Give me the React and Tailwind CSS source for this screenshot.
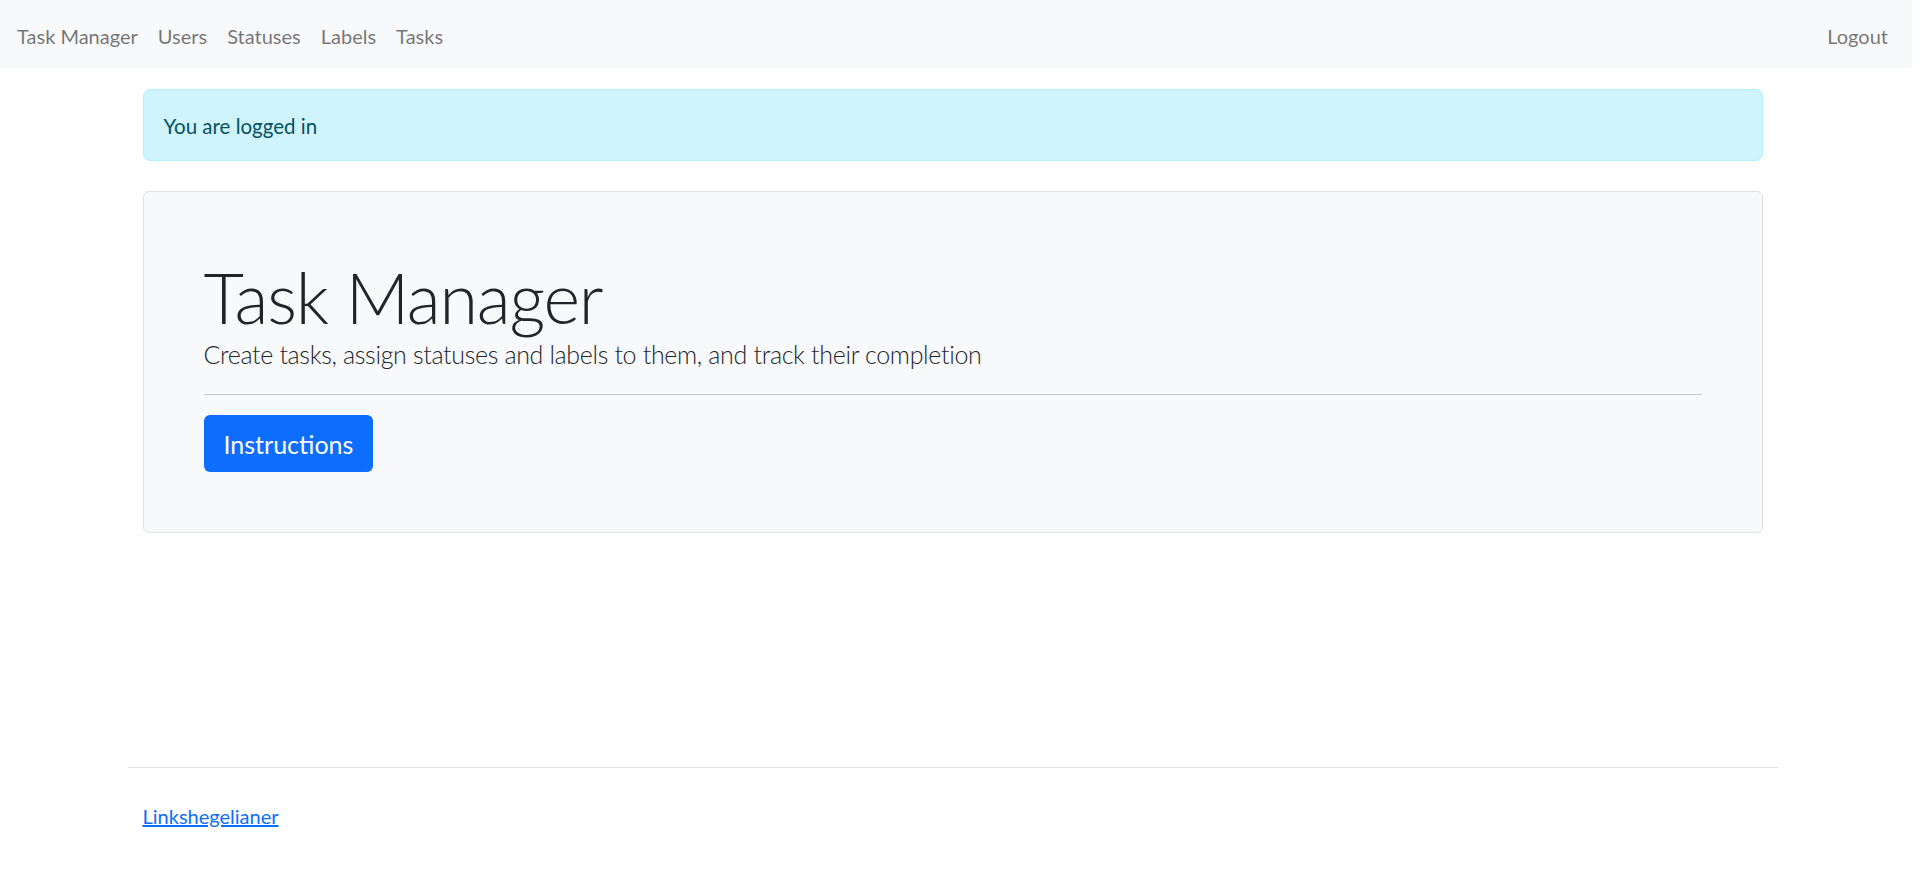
const navLinks = ['Users', 'Statuses', 'Labels', 'Tasks'];

const App = () => {
  return (
    <div
      className="flex min-h-[886px] w-[1905px] flex-col bg-white text-[20px] leading-[30px] text-[#212529]"
      style={{ fontFamily: 'Lato, "Open Sans", sans-serif' }}
    >
      <nav className="h-[68px] w-[1912px] bg-[#f8f9fa]">
        <div className="flex h-[68px] w-[1905px] items-center justify-between px-[7px] pt-[3px]">
          <ul className="flex items-center">
            <li>
              <a href="#" className="block px-[10px] text-black/55">
                Task Manager
              </a>
            </li>
            {navLinks.map((link) => (
              <li key={link}>
                <a href="#" className="block px-[10px] text-black/55">
                  {link}
                </a>
              </li>
            ))}
          </ul>
          <a href="#" className="block px-[10px] text-black/55">
            Logout
          </a>
        </div>
      </nav>

      <main className="mx-auto w-[1650px] px-[15px]">
        <div className="mt-[21px] rounded-[7px] border border-[#b6effb] bg-[#cff4fc] px-[20px] pt-[21px] pb-[19px] text-[20.5px] text-[#055160]">
          You are logged in
        </div>

        <div className="mt-[30px] rounded-[6px] border border-[#dee2e6] bg-[#f8f9fa] p-[60px]">
          <h1 className="pt-[7px] text-[70px] leading-[77px] font-light tracking-[-1.2px]">Task Manager</h1>
          <p className="text-[25px] leading-[37.5px] font-light tracking-[-0.34px]">
            Create tasks, assign statuses and labels to them, and track their completion
          </p>
          <hr className="my-[20px] border-t border-[#c6c7c8]" />
          <a
            href="#"
            className="inline-block rounded-[6px] bg-[#0d6efd] px-[20px] pt-[11px] pb-[9px] text-[25px] leading-[37.5px] text-white"
          >
            Instructions
          </a>
        </div>
      </main>

      <footer className="mx-auto mt-auto w-[1650px] border-t border-[#dee2e6] px-[15px] pt-[33px] pb-[55px]">
        <a href="#" className="text-[#0d6efd] underline">
          Linkshegelianer
        </a>
      </footer>
    </div>
  );
};

export default App;
